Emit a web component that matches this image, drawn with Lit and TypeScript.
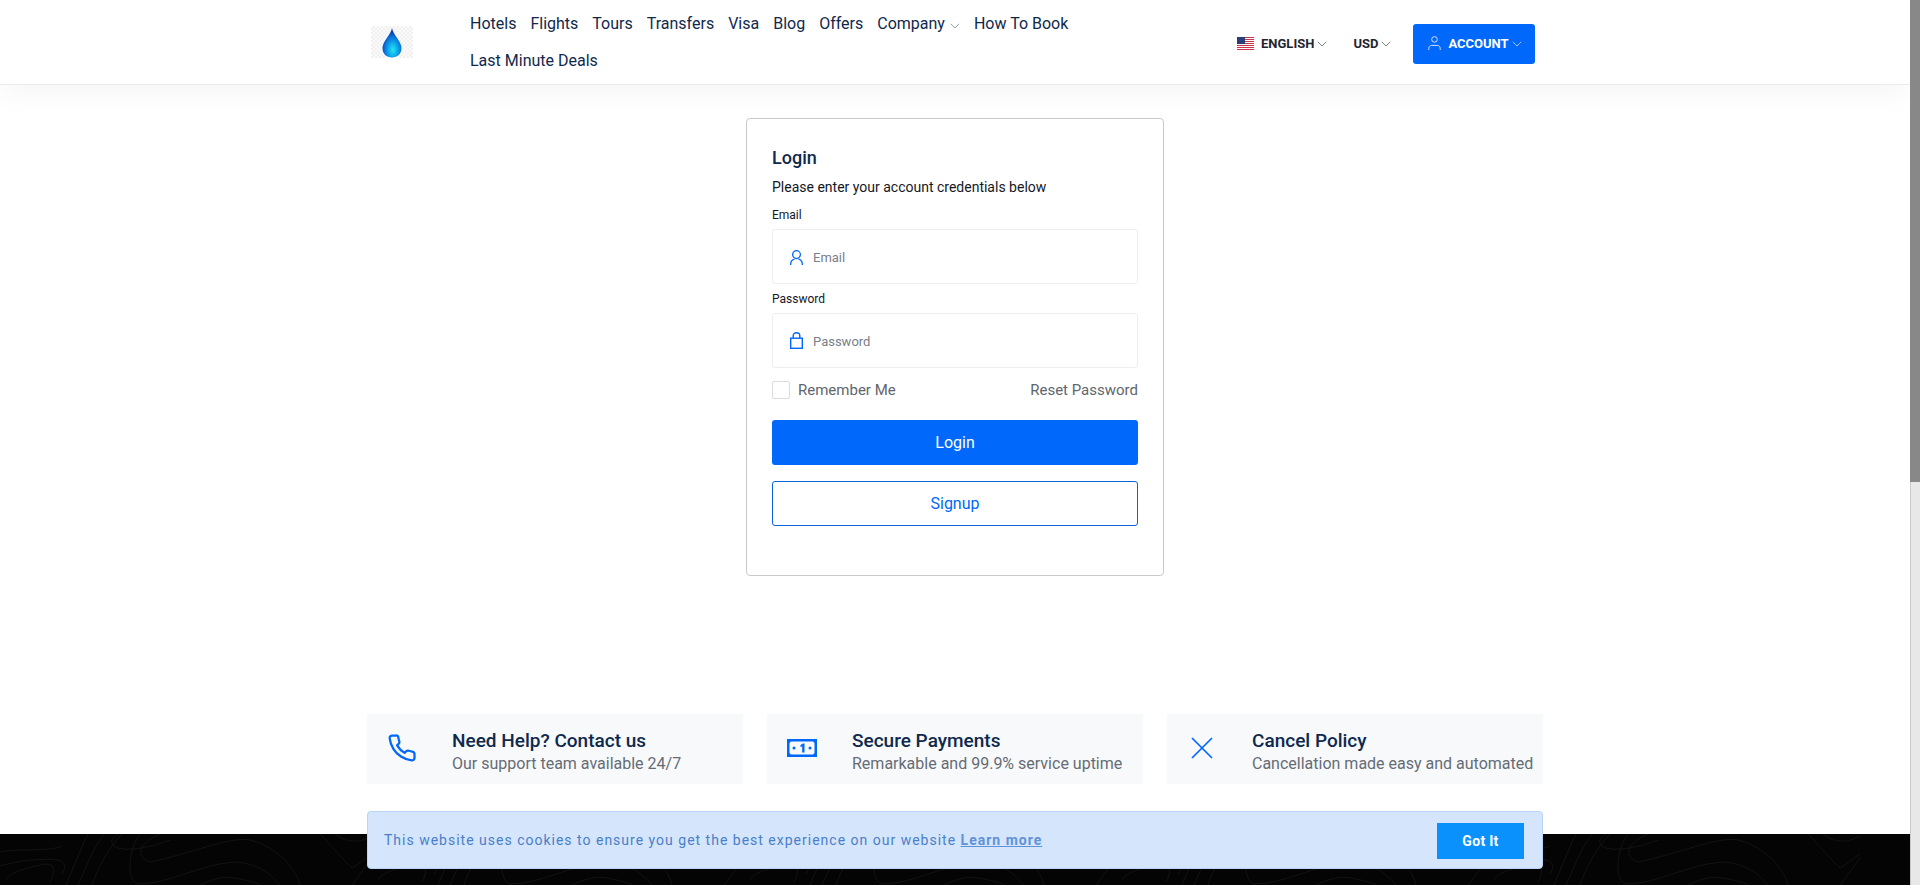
import { LitElement, html, css, svg } from "lit";
import { customElement } from "lit/decorators.js";

const chev = html`<svg class="chev" viewBox="0 0 10 6" width="10" height="6"><path d="M.8.8 5 5 9.2.8" fill="none" stroke="currentColor" stroke-width=".8"/></svg>`;

const userIcon = html`<svg viewBox="0 0 13 15" width="13" height="15" fill="none" stroke="currentColor" stroke-width="1.3"><circle cx="6.5" cy="4.6" r="3.9"/><path d="M.7 15v-1c0-2.300 1.700-4.200 3.800-4.800M12.300 15v-1c0-2.300-1.700-4.200-3.800-4.800"/></svg>`;
const acctIcon = html`<svg viewBox="0 0 13 14" width="13" height="14" fill="none" stroke="#d4e3ff" stroke-width="1"><circle cx="6.5" cy="3.4" r="2.8"/><path d="M.8 14v-1.6c0-1.8 1.3-3 3-3h5.400c1.700 0 3 1.200 3 3V14"/></svg>`;

/* Contour-line tile for the dark footer band (x offset applied per repeat). */
const contours = [
  "M0 18C20 14 50 18 62 12",
  "M0 32C20 26 45 24 58 26C66 28 66 34 62 40",
  "M6 46C10 38 30 32 48 30C56 30 54 42 50 48",
  "M66 51C74 32 80 16 88 0",
  "M78 51C86 34 92 16 104 0",
  "M92 51C98 34 108 14 122 0",
  "M118 0C100 12 122 24 170 6",
  "M160 0C140 8 134 22 150 28C190 20 230 2 250 6C270 10 295 30 300 51",
  "M140 0C128 16 126 46 138 50C170 50 200 30 235 28C260 30 270 40 280 51",
  "M200 51C215 44 225 42 235 44C245 46 256 48 260 51",
  "M320 0C330 10 345 28 352 34C362 28 368 22 372 20",
  "M335 0C345 8 358 10 372 2",
  "M352 51 372 24",
];
const tileXs = [0, 372, 744, 1116, 1488];

@customElement("app-root")
export class AppRoot extends LitElement {
  static styles = css`
    :host { display: flex; width: 1920px; height: 885px; overflow: hidden; font-family: Roboto, "Liberation Sans", sans-serif; background: #fff; }
    * { box-sizing: border-box; }
    .page { width: 1910px; height: 885px; position: relative; overflow: hidden; display: flex; flex-direction: column; }
    .scroll { width: 10px; background: #e8e8e8; border-left: 1px solid #c9c9c9; }
    .thumb { height: 482px; background: #888; margin-left: -1px; }

    header { height: 85px; background: #fff; border-bottom: 1px solid #ececec; box-shadow: 0 8px 30px rgba(0,0,0,.045); flex: none; display: flex; padding-left: 371px; position: relative; }
    .logo { width: 42px; height: 32px; margin-top: 26px; flex: none; background: repeating-conic-gradient(#f1f1f1 0 25%, #fafafa 0 50%) 0 0 / 4px 4px; display: flex; justify-content: center; }
    nav { width: 640px; margin-left: 50px; display: flex; flex-wrap: wrap; align-content: flex-start; margin-top: 5px; }
    nav a { font-size: 16px; color: #0f294d; line-height: 37px; padding: 0 7px; white-space: nowrap; display: flex; align-items: center; gap: 5px; }
    nav .chev { color: #7b8794; margin-top: 4px; }
    .right { display: flex; align-items: flex-start; margin-left: 134px; padding-top: 24px; }
    .flag { width: 17px; height: 13px; margin-right: 4px; display: block; }
    .pick { height: 40px; display: flex; align-items: center; padding-bottom: 2px; font-size: 13px; font-weight: 700; color: #1f2530; gap: 3px; }
    .pick .chev { color: #666; margin-top: 2px; }
    .pick.usd { margin-left: 26px; }
    .acct { width: 122px; height: 40px; margin-left: 22px; border-radius: 3px; background: #0068fa; color: #fff; display: flex; align-items: center; padding: 0 0 2px 15px; font-size: 13px; font-weight: 700; }
    .acct svg:first-child { margin-right: 7px; }
    .acct .chev { margin-left: 3px; margin-top: 2px; color: #cfe0ff; }

    .card { align-self: center; width: 418px; height: 458px; margin-top: 33px; border: 1px solid #c9c9c9; border-radius: 4px; padding: 25px 25px; flex: none; background: #fff; }
    h1 { margin: 0; font-size: 18px; font-weight: 500; line-height: 28px; color: #0f294d; }
    .sub { font-size: 14px; line-height: 20px; color: #14181f; margin-top: 5px; }
    label { display: block; font-size: 12px; line-height: 16px; color: #14181f; }
    .l1 { margin-top: 10px; }
    .l2 { margin-top: 7px; }
    .field { height: 55px; border: 1px solid #eceff1; border-radius: 3px; margin-top: 6px; display: flex; align-items: center; padding: 1px 0 0 17px; font-size: 13px; color: #78808a; }
    .field svg { color: #0068fa; margin-right: 10px; flex: none; }
    .lock { margin-top: -2px; }
    .row { display: flex; justify-content: space-between; align-items: center; margin-top: 13px; height: 18px; font-size: 15px; color: #61666e; }
    .check { display: flex; align-items: center; gap: 8px; }
    .box { width: 18px; height: 18px; border: 1px solid #d9dce0; border-radius: 2px; }
    .btn { height: 45px; border-radius: 3px; display: flex; align-items: center; justify-content: center; font-size: 16px; }
    .primary { background: #0068fa; color: #fff; margin-top: 21px; }
    .outline { border: 1px solid #0b62db; color: #0068fa; margin-top: 16px; }

    .features { width: 1176px; align-self: center; display: flex; gap: 24px; margin-top: 138px; flex: none; }
    .feat { flex: 1; height: 70px; background: #f7f9fb; display: flex; align-items: center; position: relative; padding: 6px 0 0 85px; }
    .feat svg { position: absolute; color: #0068fa; }
    .feat h3 { margin: 0; font-size: 19px; font-weight: 500; line-height: 22px; color: #0f294d; }
    .feat p { margin: 1px 0 0; font-size: 16px; line-height: 22px; color: #666c75; white-space: nowrap; }

    footer { flex: 1; margin-top: 50px; background: #040404; overflow: hidden; }
    footer svg { display: block; }

    .cookie { position: absolute; left: 367px; top: 811px; width: 1176px; height: 58px; background: #d4e5fc; border: 1px solid #b8d4f8; border-radius: 4px; display: flex; align-items: center; justify-content: space-between; padding: 0 18px 0 16px; font-size: 14px; letter-spacing: 1px; color: #4a7fc9; }
    .cookie b { font-weight: 700; color: #5f93d8; text-decoration: underline; }
    .got { width: 87px; height: 36px; margin-top: 2px; background: #0a91fb; color: #fff; font-weight: 700; letter-spacing: .3px; display: flex; align-items: center; justify-content: center; }
  `;

  render() {
    const navs = ["Hotels", "Flights", "Tours", "Transfers", "Visa", "Blog", "Offers"];
    return html`
      <div class="page">
        <header>
          <div class="logo">
            <svg viewBox="0 0 20 30" width="20" height="30" style="margin-top:2px">
              <defs>
                <radialGradient id="d" cx=".55" cy=".74" r=".6">
                  <stop offset="0" stop-color="#22e6f2"/><stop offset=".35" stop-color="#0fb2ee"/><stop offset=".75" stop-color="#0a6fd8"/><stop offset="1" stop-color="#0b3fa8"/>
                </radialGradient>
              </defs>
              <path d="M10 0C11 7 19.500 13 19.500 20 19.500 25.800 15.500 29.500 10 29.500S.5 25.800.5 20C.5 13 9 7 10 0Z" fill="url(#d)"/>
            </svg>
          </div>
          <nav>
            ${navs.map((n) => html`<a>${n}</a>`)}
            <a>Company ${chev}</a>
            <a>How To Book</a>
            <a>Last Minute Deals</a>
          </nav>
          <div class="right">
            <div class="pick">
              <svg class="flag" viewBox="0 0 17 13"><rect width="17" height="13" fill="#fff"/><path d="M0 .5h17M0 2.500h17M0 4.500h17M0 6.500h17M0 8.500h17M0 10.500h17M0 12.500h17" stroke="#c8354a" stroke-width="1"/><rect width="8" height="7" fill="#2c3e78"/></svg>
              ENGLISH ${chev}
            </div>
            <div class="pick usd">USD ${chev}</div>
            <div class="acct">${acctIcon} ACCOUNT ${chev}</div>
          </div>
        </header>

        <div class="card">
          <h1>Login</h1>
          <div class="sub">Please enter your account credentials below</div>
          <label class="l1">Email</label>
          <div class="field">${userIcon}Email</div>
          <label class="l2">Password</label>
          <div class="field">
            <svg class="lock" viewBox="0 0 13 17" width="13" height="17" fill="none" stroke="currentColor" stroke-width="1.4"><rect x=".7" y="6.200" width="11.600" height="10.100"/><path d="M3.200 6.200V3.800a3.300 3.100 0 0 1 6.600 0v2.400"/></svg>
            Password
          </div>
          <div class="row">
            <div class="check"><div class="box"></div>Remember Me</div>
            <div>Reset Password</div>
          </div>
          <div class="btn primary">Login</div>
          <div class="btn outline">Signup</div>
        </div>

        <div class="features">
          <div class="feat">
            <svg style="left:20px;top:19px" width="30" height="30" viewBox="0 0 24 24" fill="none" stroke="currentColor" stroke-width="1.8" stroke-linejoin="round"><path d="M22 16.920v3a2 2 0 0 1-2.180 2 19.790 19.790 0 0 1-8.630-3.070 19.500 19.500 0 0 1-6-6 19.790 19.790 0 0 1-3.070-8.670A2 2 0 0 1 4.110 2h3a2 2 0 0 1 2 1.720 12.840 12.840 0 0 0 .7 2.810 2 2 0 0 1-.45 2.110L8.090 9.910a16 16 0 0 0 6 6l1.270-1.270a2 2 0 0 1 2.110-.45 12.840 12.840 0 0 0 2.810.7A2 2 0 0 1 22 16.920z"/></svg>
            <div><h3>Need Help? Contact us</h3><p>Our support team available 24/7</p></div>
          </div>
          <div class="feat">
            <svg style="left:20px;top:25px" width="30" height="18" viewBox="0 0 30 18"><path fill-rule="evenodd" d="M0 0h30v18H0zM4 2.500 2.500 4v10L4 15.500h22l1.500-1.500V4L26 2.500z" fill="currentColor"/><path d="M13.500 6 16 4.500h1.500v9h-2.300V7.300l-1.700.9z" fill="currentColor"/><circle cx="7" cy="9" r="1.500" fill="currentColor"/><circle cx="23" cy="9" r="1.500" fill="currentColor"/></svg>
            <div><h3>Secure Payments</h3><p>Remarkable and 99.9% service uptime</p></div>
          </div>
          <div class="feat">
            <svg style="left:24px;top:23px" width="22" height="22" viewBox="0 0 22 22"><path d="M1 1l20 20M21 1 1 21" stroke="currentColor" stroke-width="1.7"/></svg>
            <div><h3>Cancel Policy</h3><p>Cancellation made easy and automated</p></div>
          </div>
        </div>

        <footer>
          <svg width="1910" height="51" viewBox="0 0 1910 51" fill="none" stroke="#131313" stroke-width="1">
            ${tileXs.map((x) => svg`<g transform="translate(${x} 0)">${contours.map((d) => svg`<path d=${d}/>`)}</g>`)}
          </svg>
        </footer>

        <div class="cookie">
          <span>This website uses cookies to ensure you get the best experience on our website <b>Learn more</b></span>
          <div class="got">Got It</div>
        </div>
      </div>
      <div class="scroll"><div class="thumb"></div></div>
    `;
  }
}
